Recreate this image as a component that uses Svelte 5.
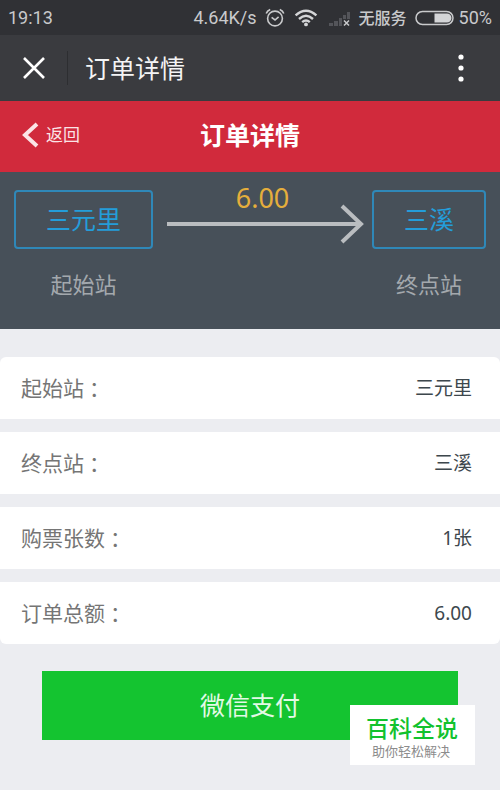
<script lang="ts">
  const order = {
    from: '三元里',
    to: '三溪',
    count: 1,
    total: 6
  };

  const rows = [
    { label: '起始站', value: order.from },
    { label: '终点站', value: order.to },
    { label: '购票张数', value: `${order.count}张` },
    { label: '订单总额', value: order.total.toFixed(2) }
  ];
</script>

<div class="page">
  <div class="status">
    <span class="time">19:13</span>
    <span>4.64K/s</span>
    <svg class="alarm" width="20" height="20" viewBox="0 0 20 20">
      <circle cx="10" cy="10.5" r="7.4" />
      <path d="M6.6 9.4 10 12l3.6-3.2M1.2 5.4Q2.2 2.6 5.2 1.4M18.8 5.4Q17.8 2.6 14.8 1.4" />
    </svg>
    <svg class="wifi" width="24" height="18" viewBox="0 0 24 18">
      <path d="M1.6 6.4Q12-3 22.4 6.4M5 10Q12 3.6 19 10M8.2 13.2Q12 9.8 15.8 13.2" />
      <circle cx="12" cy="15.4" r="1.9" />
    </svg>
    <svg class="signal" width="22" height="18" viewBox="0 0 22 18">
      <path class="bars" d="M0 14h4v3H0zM5 12h4v5H5zM10 9h3v8h-3zM14 6h3v4h-3zM18 3h3v7h-3z" />
      <path class="cross" d="m15 11.5 5 5m0-5-5 5" />
    </svg>
    <span class="carrier">无服务</span>
    <svg class="battery" width="39" height="16" viewBox="0 0 39 16">
      <rect x="1" y="1.5" width="37" height="13" rx="6.5" />
      <path d="M19.5 3.5H32a4.5 4.5 0 0 1 0 9H19.5z" />
    </svg>
    <span>50%</span>
  </div>

  <div class="nav">
    <button class="close" aria-label="关闭">
      <svg width="22" height="22" viewBox="0 0 22 22"><path d="m1 1 20 20M21 1 1 21" /></svg>
    </button>
    <span class="nav-title">订单详情</span>
    <button class="more" aria-label="更多">
      <svg width="6" height="28" viewBox="0 0 6 28">
        <circle cx="3" cy="3" r="2.6" />
        <circle cx="3" cy="14" r="2.6" />
        <circle cx="3" cy="25" r="2.6" />
      </svg>
    </button>
  </div>

  <header>
    <a class="back" href="#back">
      <svg width="17" height="26" viewBox="0 0 17 26"><path d="M15 2 3 13l12 11" /></svg>
      返回
    </a>
    <h1>订单详情</h1>
  </header>

  <section class="route">
    <div class="station">
      <div class="name">{order.from}</div>
      <div class="caption">起始站</div>
    </div>
    <div class="leg">
      <div class="price">{order.total.toFixed(2)}</div>
      <div class="arrow">
        <div class="line"></div>
        <svg width="24" height="40" viewBox="0 0 24 40"><path d="m2 2 19 18L2 38" /></svg>
      </div>
    </div>
    <div class="station">
      <div class="name">{order.to}</div>
      <div class="caption">终点站</div>
    </div>
  </section>

  <dl>
    {#each rows as row (row.label)}
      <div class="row">
        <dt>{row.label}<span class="colon">：</span></dt>
        <dd>{row.value}</dd>
      </div>
    {/each}
  </dl>

  <div class="footer">
    <button class="pay">微信支付</button>
    <div class="badge">
      <strong>百科全说</strong>
      <span>助你轻松解决</span>
    </div>
  </div>
</div>

<style>
  :global(body) {
    margin: 0;
    background: #ecedf1;
  }
  .page {
    min-height: 100vh;
    background: #ecedf1;
    font-family: 'Noto Sans', 'Noto Sans CJK SC', sans-serif;
  }
  svg {
    display: block;
    fill: none;
    flex: none;
  }
  button {
    border: 0;
    padding: 0;
    background: none;
    font-family: inherit;
    cursor: pointer;
  }

  .status {
    display: flex;
    align-items: center;
    height: 35px;
    padding: 0 8px;
    background: #303135;
    color: #c9cacc;
    font-family: Roboto, 'Noto Sans CJK SC', sans-serif;
    font-size: 18px;
    line-height: 35px;
    white-space: nowrap;
  }
  .time {
    margin-right: auto;
  }
  .alarm {
    margin-left: 8px;
    stroke: #c9cacc;
    stroke-width: 1.6;
  }
  .wifi {
    margin-left: 9px;
    stroke: #d4d5d7;
    stroke-width: 2.4;
  }
  .wifi circle {
    fill: #d4d5d7;
    stroke: none;
  }
  .signal {
    margin: 0 8px 0 11px;
  }
  .bars {
    fill: #54555a;
  }
  .cross {
    stroke: #c9cacc;
    stroke-width: 1.5;
  }
  .carrier {
    font-family: 'Noto Sans CJK SC', sans-serif;
    font-size: 16px;
    font-weight: 500;
  }
  .battery {
    margin: 0 5px 0 8px;
  }
  .battery rect {
    stroke: #c9cacc;
    stroke-width: 1.5;
  }
  .battery path {
    fill: #d4d5d7;
  }

  .nav {
    display: flex;
    align-items: center;
    height: 66px;
    padding: 0 36px 0 23px;
    background: #3a3b3f;
    color: #f4f4f5;
  }
  .close {
    padding-right: 22px;
    border-right: 1px solid #2d2e31;
    height: 34px;
  }
  .close path {
    stroke: #fff;
    stroke-width: 2.6;
  }
  .nav-title {
    margin-left: 17px;
    font-size: 25px;
    line-height: 36px;
  }
  .more {
    margin-left: auto;
  }
  .more circle {
    fill: #fff;
  }

  header {
    display: grid;
    grid-template-columns: 1fr auto 1fr;
    align-items: center;
    height: 71px;
    padding: 0 22px 3px;
    box-sizing: border-box;
    background: #d12a3c;
    color: #fff;
  }
  .back {
    display: flex;
    align-items: center;
    gap: 7px;
    color: #fbe4e6;
    font-size: 17px;
    line-height: 26px;
    text-decoration: none;
  }
  .back path {
    stroke: #fbe4e6;
    stroke-width: 4;
  }
  h1 {
    margin: 0;
    font-size: 25px;
    line-height: 36px;
  }

  .route {
    display: flex;
    padding: 18px 14px 28px;
    background: #475059;
  }
  .name {
    padding: 0 30px;
    border: 2px solid #2f88b8;
    border-radius: 4px;
    color: #249dd9;
    font-size: 25px;
    line-height: 55px;
  }
  .caption {
    margin-top: 19px;
    color: #a3a8ad;
    font-size: 22px;
    line-height: 33px;
    text-align: center;
  }
  .leg {
    flex: 1;
    margin: 0 8px 0 14px;
  }
  .price {
    margin-top: -10px;
    padding-right: 6px;
    color: #e5ae3c;
    font-size: 27px;
    line-height: 36px;
    text-align: center;
  }
  .arrow {
    display: flex;
    align-items: center;
    margin-top: -12px;
  }
  .line {
    flex: 1;
    height: 4px;
    margin-right: -20px;
    background: #babdc0;
  }
  .arrow path {
    stroke: #babdc0;
    stroke-width: 4;
  }

  dl {
    display: grid;
    gap: 13px;
    margin: 28px 0 27px;
  }
  .row {
    display: flex;
    align-items: center;
    justify-content: space-between;
    height: 62px;
    padding: 0 28px 0 21px;
    background: #fff;
  }
  .row:first-child {
    border-radius: 6px 6px 0 0;
  }
  .row:last-child {
    border-radius: 0 0 6px 6px;
  }
  dt {
    color: #757575;
    font-size: 21px;
    line-height: 30px;
  }
  .colon {
    margin-left: 5px;
  }
  dd {
    margin: 0;
    color: #3d474d;
    font-size: 19px;
    line-height: 30px;
  }

  .footer {
    position: relative;
    padding: 0 42px 49px;
  }
  .pay {
    display: block;
    width: 100%;
    height: 69px;
    padding-bottom: 4px;
    background: #14c430;
    color: #e3f9e6;
    font-size: 25px;
  }
  .badge {
    position: absolute;
    top: 34px;
    right: 25px;
    display: flex;
    flex-direction: column;
    width: 125px;
    height: 60px;
    padding: 8px 0 0 16px;
    box-sizing: border-box;
    background: #fff;
  }
  .badge strong {
    color: #12c22e;
    font-size: 23px;
    font-weight: 500;
    line-height: 30px;
  }
  .badge span {
    padding-left: 6px;
    color: #8c8c8c;
    font-size: 13px;
    line-height: 16px;
  }
</style>
